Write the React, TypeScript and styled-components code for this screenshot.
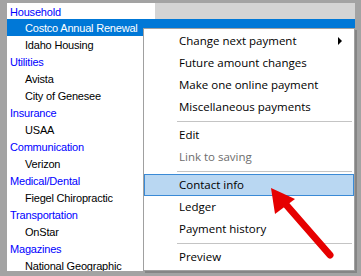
import * as React from 'react'
import styled, {createGlobalStyle} from 'styled-components'

const Global = createGlobalStyle`
  html, body {
    margin: 0;
    padding: 0;
    background: #a3a3a3;
  }
`

const Frame = styled.div`
  position: relative;
  width: 361px;
  height: 276px;
  box-sizing: border-box;
  padding: 3px 6px 5px 7px;
  background: #a3a3a3;
  overflow: hidden;
`

const Window = styled.div`
  height: 100%;
  background: #ffffff;
  overflow: hidden;
  display: flex;
  flex-direction: column;
`

const Row = styled.div<{ selected?: boolean, top?: boolean }>`
  flex: none;
  display: flex;
  align-items: center;
  height: ${p => p.top ? 16 : 17}px;
  background: ${p => p.selected ? '#0078d7' : 'transparent'};
`

const Label = styled.div<{ category?: boolean, selected?: boolean }>`
  width: 148px;
  box-sizing: border-box;
  padding: 1px 0 0 ${p => p.category ? 3 : 18}px;
  font-family: "Liberation Sans", Arial, sans-serif;
  font-size: 11px;
  letter-spacing: -0.2px;
  white-space: nowrap;
  color: ${p => p.selected ? '#ffffff' : p.category ? '#0000ff' : '#000000'};
  background: ${p => p.selected ? 'transparent' : '#ffffff'};
  height: 100%;
  display: flex;
  align-items: center;
`

const Filler = styled.div<{ shade?: boolean }>`
  flex: 1;
  height: 100%;
  background: ${p => p.shade ? '#d4d4d4' : 'transparent'};
`

const Menu = styled.div`
  position: absolute;
  left: 143px;
  top: 28px;
  width: 212px;
  height: 243px;
  box-sizing: border-box;
  border: 1px solid #a0a0a0;
  background: #ffffff;
  padding: 1px 0 2px;
  box-shadow: 2px 2px 0 rgba(0, 0, 0, 0.18);
  font-family: "Open Sans", "Segoe UI", sans-serif;
  font-size: 11.5px;
`

const Item = styled.div<{ active?: boolean, disabled?: boolean }>`
  position: relative;
  height: 22px;
  box-sizing: border-box;
  display: flex;
  align-items: center;
  padding: 0 0 2px 34px;
  color: ${p => p.disabled ? '#6d6d6d' : '#000000'};
  background: ${p => p.active ? '#b9d7f2' : 'transparent'};
  border: 1px solid ${p => p.active ? '#3a8ad6' : 'transparent'};
  white-space: nowrap;
`

const SubArrow = styled.svg`
  position: absolute;
  right: 10px;
  top: 6px;
`

const Separator = styled.div`
  height: 6px;
  display: flex;
  align-items: center;
  padding-left: 33px;
  padding-right: 2px;
  &::after {
    content: '';
    flex: 1;
    height: 1px;
    background: #c4c4c4;
  }
`

const Pointer = styled.svg`
  position: absolute;
  left: 0;
  top: 0;
  pointer-events: none;
`

const tree: { text: string, category?: boolean, selected?: boolean }[] = [
    {text: 'Household', category: true},
    {text: 'Costco Annual Renewal', selected: true},
    {text: 'Idaho Housing'},
    {text: 'Utilities', category: true},
    {text: 'Avista'},
    {text: 'City of Genesee'},
    {text: 'Insurance', category: true},
    {text: 'USAA'},
    {text: 'Communication', category: true},
    {text: 'Verizon'},
    {text: 'Medical/Dental', category: true},
    {text: 'Fiegel Chiropractic'},
    {text: 'Transportation', category: true},
    {text: 'OnStar'},
    {text: 'Magazines', category: true},
    {text: 'National Geographic'},
]

type MenuEntry = { text?: string, sub?: boolean, disabled?: boolean, active?: boolean, sep?: boolean }

const menu: MenuEntry[] = [
    {text: 'Change next payment', sub: true},
    {text: 'Future amount changes'},
    {text: 'Make one online payment'},
    {text: 'Miscellaneous payments'},
    {sep: true},
    {text: 'Edit'},
    {text: 'Link to saving', disabled: true},
    {sep: true},
    {text: 'Contact info', active: true},
    {text: 'Ledger'},
    {text: 'Payment history'},
    {sep: true},
    {text: 'Preview'},
]

export default function App() {
    return <>
        <Global/>
        <Frame>
            <Window>
                {tree.map((r, i) =>
                    <Row key={i} selected={r.selected} top={i === 0}>
                        <Label category={r.category} selected={r.selected}>{r.text}</Label>
                        <Filler shade={i === 0}/>
                    </Row>
                )}
            </Window>
            <Menu>
                {menu.map((m, i) => m.sep
                    ? <Separator key={i}/>
                    : <Item key={i} active={m.active} disabled={m.disabled}>
                        {m.text}
                        {m.sub && <SubArrow width="5" height="8" viewBox="0 0 5 8">
                            <polygon points="0,0 4,4 0,8" fill="#000"/>
                        </SubArrow>}
                    </Item>
                )}
            </Menu>
            <Pointer width="361" height="276" viewBox="0 0 361 276">
                <line x1="330" y1="255" x2="282" y2="200" stroke="#e60000" strokeWidth="7" strokeLinecap="round"/>
                <polygon points="271,188 275,214 295,199" fill="#e60000"/>
            </Pointer>
        </Frame>
    </>
}
